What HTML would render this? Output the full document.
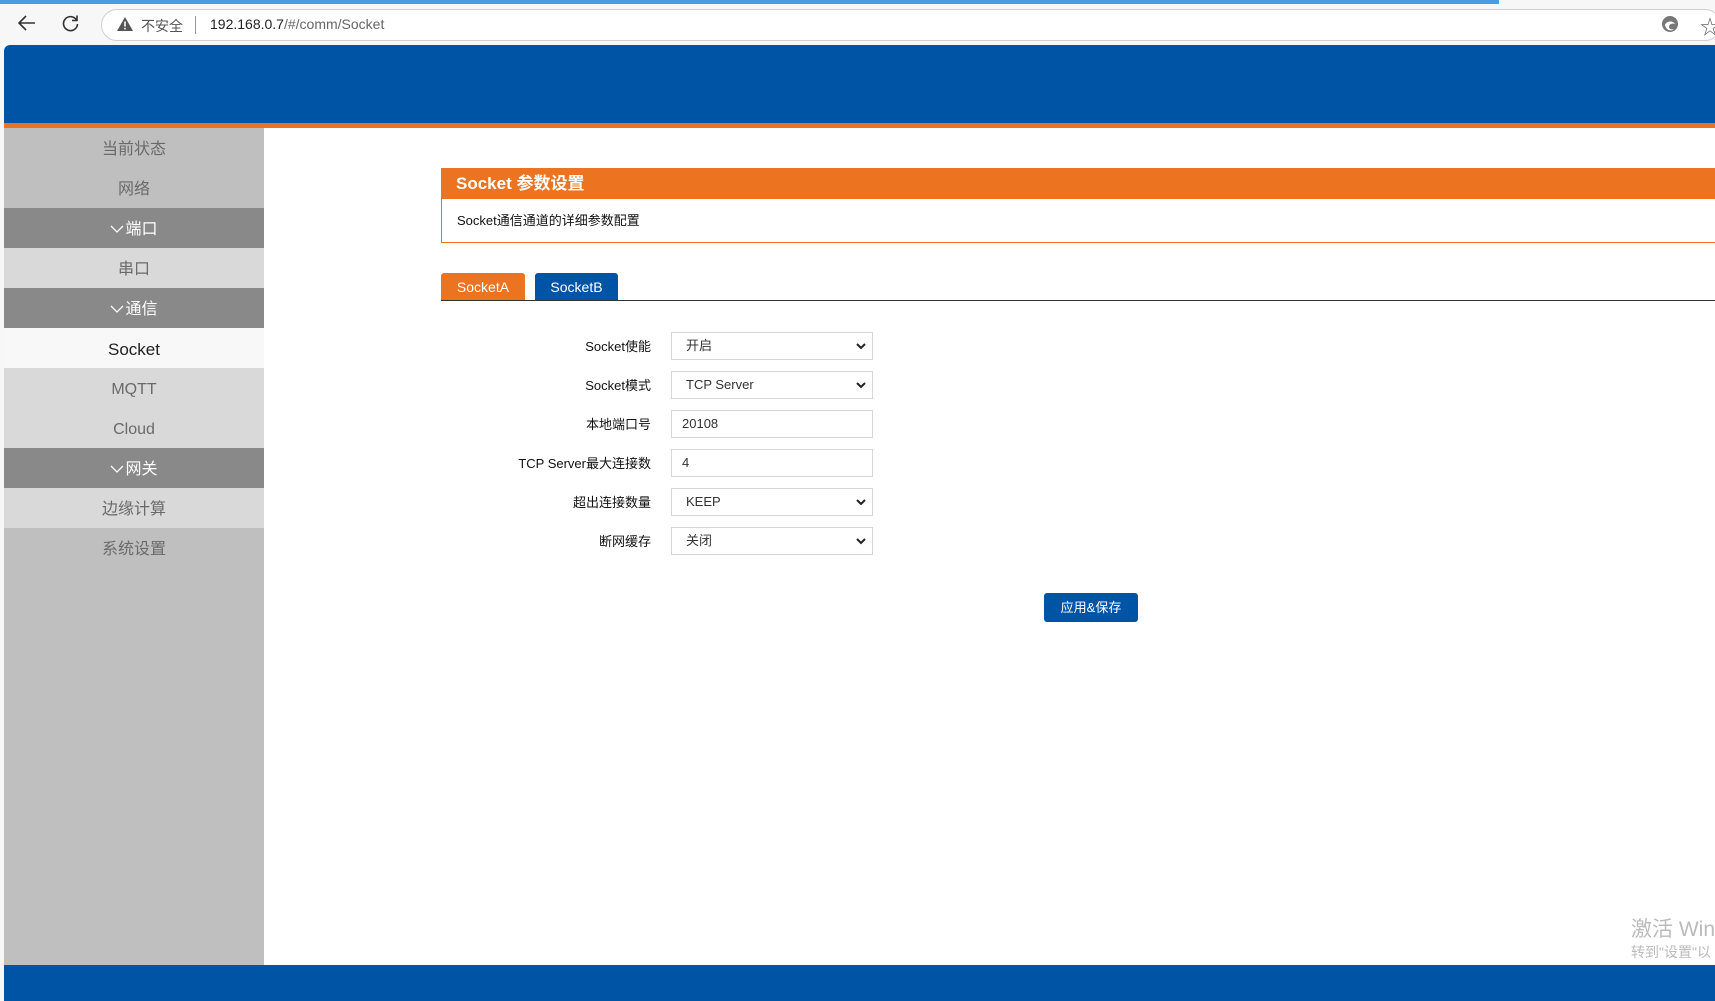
<!DOCTYPE html>
<html><head><meta charset="utf-8">
<style>
*{margin:0;padding:0;box-sizing:border-box}
body{width:1715px;height:1001px;overflow:hidden;background:#f7f7f7;font-family:"Liberation Sans","Noto Sans CJK SC",sans-serif;position:relative}
.abs{position:absolute}
.prog{left:0;top:0;width:1499px;height:4px;background:#4a9de0}
.addr{left:101px;top:9px;width:1620px;height:32px;border:1px solid #d0d0d0;border-radius:16px;background:#fff}
.page{left:4px;top:45px;width:1711px;height:956px;background:#fff;border-top-left-radius:6px;overflow:hidden}
.hdr{left:0;top:0;width:100%;height:78px;background:#0054a6}
.ostrip{left:0;top:78px;width:100%;height:5px;background:#ec7421}
.side{left:0;top:83px;width:260px;height:837px;background:#bfbfbf}
.side div{height:40px;line-height:44px;text-align:center;font-size:16px;color:#6a6a6a}
.side .dk{background:#898989;color:#fff}
.side .dk svg{margin-right:1px;vertical-align:1px}
.side .lt{background:#d9d9d9}
.side .act{background:#f8f8f8;color:#222;font-size:17px}
.foot{left:0;top:920px;width:100%;height:40px;background:#0054a6}
.ph{left:437px;top:123px;width:1280px;height:31px;background:#ec7421;color:#fff;font-weight:bold;font-size:17px;line-height:31px;padding-left:15px}
.pb{left:437px;top:154px;width:1280px;height:44px;border:1px solid #ec7421;border-top:none;font-size:13px;line-height:44px;padding-left:15px;color:#111}
.tab{top:228px;height:28px;color:#fff;font-size:14px;line-height:28px;text-align:center;border-radius:3px 3px 0 0}
.tline{left:437px;top:255px;width:1280px;height:1px;background:#333}
.lbl{width:300px;left:347px;text-align:right;font-size:13px;color:#111;height:28px;line-height:30px}
.inp{left:667px;width:202px;height:28px;border:1px solid #d6d6d6;font-size:13px;color:#333;line-height:26px;padding-left:14px;background:#fff}
.inp.t{padding-left:10px}
.inp svg{position:absolute;right:6px;top:10px}
.btn{left:1040px;top:548px;width:94px;height:29px;background:#0054a6;color:#fff;border-radius:3px;font-size:13px;line-height:29px;text-align:center}
</style></head><body>
<div class="abs prog"></div>
<svg class="abs" style="left:17px;top:14px" width="20" height="18" viewBox="0 0 20 18"><path d="M18 9H3M9 2L2 9l7 7" stroke="#333" stroke-width="1.6" fill="none"/></svg>
<svg class="abs" style="left:62px;top:14px" width="18" height="18" viewBox="0 0 18 18"><path d="M14.5 6A7 7 0 1 0 15.5 10" stroke="#333" stroke-width="1.6" fill="none"/><path d="M15 1.5V6.5H10" stroke="#333" stroke-width="1.6" fill="none"/></svg>
<div class="abs addr"></div>
<svg class="abs" style="left:117px;top:17px" width="16" height="14" viewBox="0 0 16 14"><path d="M8 0L16 14H0Z" fill="#555"/><rect x="7.2" y="4.5" width="1.6" height="5" fill="#fff"/><rect x="7.2" y="10.8" width="1.6" height="1.6" fill="#fff"/></svg>
<div class="abs" style="left:141px;top:16px;font-size:14px;color:#555">不安全</div>
<div class="abs" style="left:195px;top:16px;width:1px;height:18px;background:#999"></div>
<div class="abs" style="left:210px;top:16px;font-size:14px;color:#222">192.168.0.7<span style="color:#666">/#/comm/Socket</span></div>
<svg class="abs" style="left:1661px;top:15px" width="18" height="18" viewBox="0 0 18 18"><circle cx="9" cy="9" r="8" fill="#777"/><path d="M4 10c1-4 8-5 10-1-3-1-6 0-6 3 0 2 3 3 5 2-3 3-8 1-9-4z" fill="#fff"/></svg>
<div class="abs" style="left:1700px;top:11px;font-size:20px;color:#666">☆</div>
<div class="abs page">
<div class="abs hdr"></div>
<div class="abs ostrip"></div>
<div class="abs side">
<div>当前状态</div><div>网络</div>
<div class="dk"><svg width="14" height="8" viewBox="0 0 14 8"><path d="M1 1l6 6 6-6" stroke="#fff" stroke-width="1.3" fill="none"/></svg>端口</div>
<div class="lt">串口</div>
<div class="dk"><svg width="14" height="8" viewBox="0 0 14 8"><path d="M1 1l6 6 6-6" stroke="#fff" stroke-width="1.3" fill="none"/></svg>通信</div>
<div class="act">Socket</div><div class="lt">MQTT</div><div class="lt">Cloud</div>
<div class="dk"><svg width="14" height="8" viewBox="0 0 14 8"><path d="M1 1l6 6 6-6" stroke="#fff" stroke-width="1.3" fill="none"/></svg>网关</div>
<div class="lt">边缘计算</div><div>系统设置</div>
</div>
<div class="abs foot"></div>
<div class="abs ph">Socket 参数设置</div>
<div class="abs pb">Socket通信通道的详细参数配置</div>
<div class="abs tab" style="left:437px;width:84px;background:#ec7421">SocketA</div>
<div class="abs tab" style="left:531px;width:83px;background:#0054a6">SocketB</div>
<div class="abs tline"></div>
<div class="abs lbl" style="top:287px">Socket使能</div>
<div class="abs inp" style="top:287px">开启<svg width="10" height="7" viewBox="0 0 10 7"><path d="M1 1l4 4 4-4" stroke="#222" stroke-width="2" fill="none"/></svg></div>
<div class="abs lbl" style="top:326px">Socket模式</div>
<div class="abs inp" style="top:326px">TCP Server<svg width="10" height="7" viewBox="0 0 10 7"><path d="M1 1l4 4 4-4" stroke="#222" stroke-width="2" fill="none"/></svg></div>
<div class="abs lbl" style="top:365px">本地端口号</div>
<div class="abs inp t" style="top:365px">20108</div>
<div class="abs lbl" style="top:404px">TCP Server最大连接数</div>
<div class="abs inp t" style="top:404px">4</div>
<div class="abs lbl" style="top:443px">超出连接数量</div>
<div class="abs inp" style="top:443px">KEEP<svg width="10" height="7" viewBox="0 0 10 7"><path d="M1 1l4 4 4-4" stroke="#222" stroke-width="2" fill="none"/></svg></div>
<div class="abs lbl" style="top:482px">断网缓存</div>
<div class="abs inp" style="top:482px">关闭<svg width="10" height="7" viewBox="0 0 10 7"><path d="M1 1l4 4 4-4" stroke="#222" stroke-width="2" fill="none"/></svg></div>
<div class="abs btn">应用&amp;保存</div>
<div class="abs" style="left:1627px;top:868px;font-size:21px;color:#bbb;white-space:nowrap">激活 Win</div>
<div class="abs" style="left:1627px;top:897px;font-size:14px;color:#bbb;white-space:nowrap">转到"设置"以</div>
</div>
</body></html>
